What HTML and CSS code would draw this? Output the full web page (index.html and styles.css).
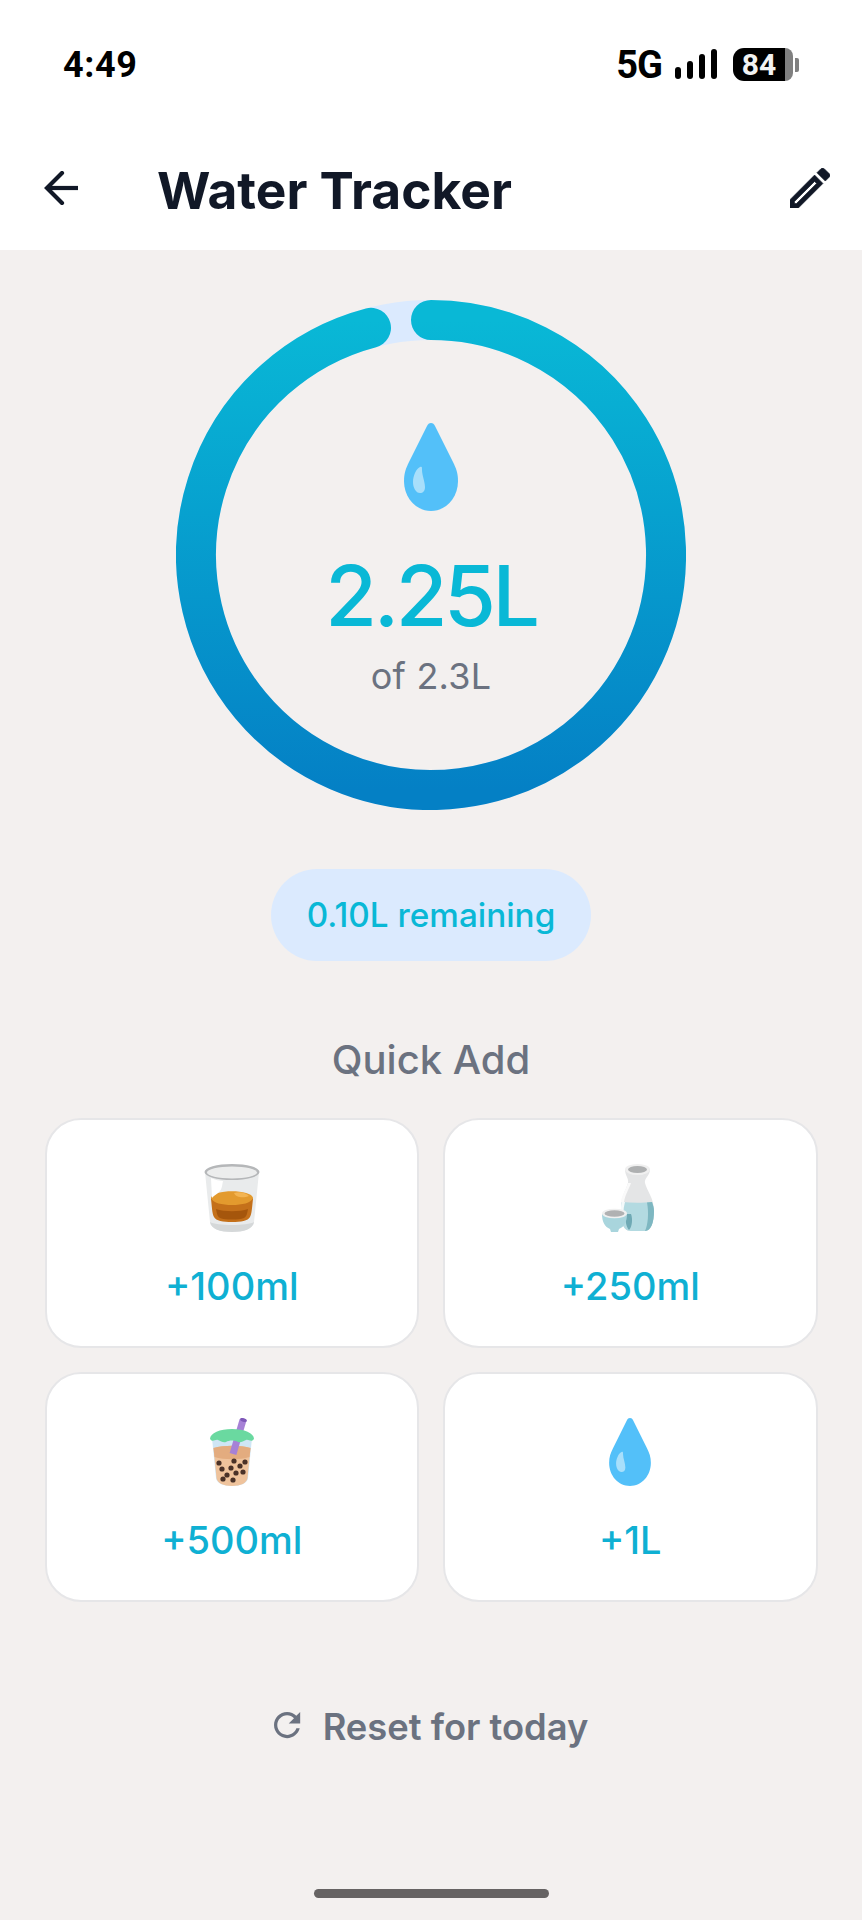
FILE: index.html
```html
<!DOCTYPE html>
<html lang="en">
<head>
  <meta charset="UTF-8">
  <meta name="viewport" content="width=device-width, initial-scale=1.0">
  <title>Water Tracker</title>
  <link rel="stylesheet" href="styles.css">
</head>
<body>
  <svg class="defs" width="0" height="0" aria-hidden="true">
    <defs>
      <symbol id="drop" viewBox="0 0 54 88">
        <path d="M27 0c2 0 3 1 4 3l18 36c3 6 5 11 5 19 0 17-12 30-27 30S0 75 0 58c0-8 2-13 5-19L23 3c1-2 2-3 4-3z" fill="#53c0f9"/>
        <path d="M16 44c2-1 2 0 2 3 0 5 3 12 3 17 0 4-2 6-5 6-4 0-7-5-7-11 0-6 3-13 7-15z" fill="#a8dffb"/>
      </symbol>
    </defs>
  </svg>

  <div class="screen">
    <!-- header -->
    <header class="top">
      <div class="status">
        <span class="time">4:49</span>
        <div class="status-right">
          <span class="net">5G</span>
          <div class="signal">
            <i class="bar-1"></i><i class="bar-2"></i><i class="bar-3"></i><i class="bar-4"></i>
          </div>
          <div class="battery">
            <span class="battery-level">84</span>
            <span class="battery-rest"></span>
            <span class="battery-nub"></span>
          </div>
        </div>
      </div>
      <div class="appbar">
        <svg class="back" viewBox="0 0 35 34" fill="none" stroke="#111827" stroke-width="4.2">
          <path d="M34 17H4"/>
          <path d="M18 2 3 17 18 32" stroke-linecap="round"/>
        </svg>
        <h1>Water Tracker</h1>
        <svg class="edit" viewBox="3 3 18 18" fill="#111827" stroke="#111827" stroke-width=".3">
          <path d="M14.06 9.02l.92.92L5.92 19H5v-.92l9.06-9.06M17.66 3c-.25 0-.51.1-.7.29l-1.83 1.83 3.75 3.75 1.83-1.83c.39-.39.39-1.02 0-1.41l-2.34-2.34c-.2-.2-.45-.29-.71-.29zm-3.6 3.19L3 17.25V21h3.75L17.81 9.94l-3.75-3.75z"/>
        </svg>
      </div>
    </header>

    <main class="content">
      <!-- progress ring -->
      <section class="ring">
        <svg class="ring-svg" viewBox="0 0 510 510" fill="none">
          <defs>
            <linearGradient id="ring-grad" x1="0" y1="0" x2="0" y2="1">
              <stop offset="0" stop-color="#09b8d6"/>
              <stop offset="1" stop-color="#0480c5"/>
            </linearGradient>
          </defs>
          <circle cx="255" cy="255" r="235" stroke="#dbeafe" stroke-width="40"/>
          <path d="M255 20A235 235 0 1 1 195 27.8" stroke="url(#ring-grad)" stroke-width="40" stroke-linecap="round"/>
        </svg>
        <div class="ring-inner">
          <svg class="ring-drop"><use href="#drop"/></svg>
          <div class="amount">2.25L</div>
          <div class="goal">of 2.3L</div>
        </div>
      </section>

      <div class="pill">0.10L remaining</div>

      <h2>Quick Add</h2>

      <div class="cards">
        <button class="card">
          <svg class="card-icon" viewBox="0 0 56 68">
            <path d="M1 8 6 58c.5 6 10 10 22 10s21.500-4 22-10L55 8z" fill="#e9ebec"/>
            <path d="M7 35c1-9 41-9 42 0-1 8-1 14-3 18-2 4-9 5-18 5s-16-1-18-5c-2-4-2-10-3-18z" fill="#c4701a"/>
            <path d="M7 34c1-9 41-9 42 0-2 5-11 7-21 7S9 39 7 34z" fill="#e39a2e"/>
            <path d="M12 45c8 3 24 3 32 0-1 6-2 8-4 9-5 2-19 2-24 0-2-1-3-3-4-9z" fill="#a5560c"/>
            <path d="M30 29c6-2 12 0 15 3-5 2-13 2-15-3z" fill="#f3b452"/>
            <path d="M7 14c4 2 9 3 12 3-1 5-1 9-5 12-2 2-5 3-6 5z" fill="#fff"/>
            <ellipse cx="28" cy="8" rx="27.500" ry="8" fill="#b5b7b9"/>
            <ellipse cx="28" cy="8.500" rx="25" ry="6" fill="#eceded"/>
            <path d="M6 58c1 7 10 10 22 10s21-3 22-10c-6 4-38 4-44 0z" fill="#d5d8d9"/>
          </svg>
          <span>+100ml</span>
        </button>
        <button class="card">
          <svg class="card-icon" viewBox="0 0 56 68">
            <path d="M23 5c0 7 4 9 3 14-2 7-7 13-7 26 0 11 1 22 10 22h14c6 0 9-9 9-20 0-13-7-20-9-28-1-5 5-7 5-14z" fill="#e4e5e6"/>
            <path d="M20 38c10 1 21 1 30 0 1 3 2 6 2 9 0 11-3 20-9 20H29c-9 0-10-11-10-22 0-3 0-5 1-7z" fill="#b3dae1"/>
            <path d="M45 38.500l5-.500c1 3 2 6 2 9 0 11-3 20-9 20 3-6 4-18 2-28.500z" fill="#7eb7c1"/>
            <path d="M20 38c-1 2-1 4-1 7 0 6 0 12 2 16 0-8 0-16 2-23z" fill="#f4fafb"/>
            <path d="M26 19c-2 7-7 13-7 19h3c1-7 5-13 7-19z" fill="#fafafa"/>
            <ellipse cx="35.500" cy="5.500" rx="12.500" ry="5.500" fill="#f0f0f0"/>
            <ellipse cx="35.500" cy="5.500" rx="9.500" ry="3.500" fill="#aeb0b1"/>
            <path d="M24 50h5c2 5 1 13-2 16-3-3-4-10-3-16z" fill="#6fa9b4"/>
            <path d="M0 50c0 8 3 13 8 15l1 3h7l1-3c5-2 8-7 8-15z" fill="#a9d5dd"/>
            <ellipse cx="12.500" cy="49.500" rx="12.500" ry="4.800" fill="#f0f0f0"/>
            <ellipse cx="12.500" cy="49.500" rx="10" ry="3.200" fill="#b0b1b2"/>
          </svg>
          <span>+250ml</span>
        </button>
        <button class="card">
          <svg class="card-icon card-tea" viewBox="0 0 44 68">
            <path d="M2 20 6 60c.5 5 7 8 16 8s15.500-3 16-8l4-40z" fill="#cfe6f5"/>
            <path d="M3.500 30c10-3 27-3 37 0l-3 30c-.5 5-7 8-15.500 8S7 65 6.500 60z" fill="#efc39c"/>
            <path d="M3.500 30c10-3 27-3 37 0l-1 9c-9 3-26 3-35 0z" fill="#e3ac7f"/>
            <path d="M33 2 23 36" fill="none" stroke="#a681d6" stroke-width="7"/>
            <g fill="#4a3228">
              <circle cx="9" cy="45" r="2.600"/><circle cx="24" cy="43" r="2.600"/><circle cx="35" cy="44" r="2.600"/>
              <circle cx="12" cy="51" r="2.600"/><circle cx="21" cy="50" r="2.600"/><circle cx="30" cy="48" r="2.600"/>
              <circle cx="17" cy="57" r="2.600"/><circle cx="26" cy="55" r="2.600"/><circle cx="33" cy="54" r="2.600"/>
              <circle cx="23" cy="62" r="2.600"/><circle cx="13" cy="61" r="2.600"/>
            </g>
            <path d="M0 21C0 15 10 11 22 11s22 4 22 10c-3 4-5 0-8 1-3 1-5 3-8 2-3-2-9-2-12 0-3 1-5-1-8-2-3-1-5 3-8-1z" fill="#6ad9a0"/>
            <ellipse cx="33.500" cy="2" rx="3.500" ry="1.800" fill="#7e57b8" transform="rotate(17 33.500 2)"/>
          </svg>
          <span>+500ml</span>
        </button>
        <button class="card">
          <svg class="card-icon card-drop"><use href="#drop"/></svg>
          <span>+1L</span>
        </button>
      </div>

      <button class="reset">
        <svg class="reset-icon" viewBox="4 4 16.500 16.500" fill="#6b7280">
          <path d="M17.650 6.350C16.200 4.900 14.210 4 12 4c-4.420 0-7.990 3.580-7.990 8s3.570 8 7.990 8c3.730 0 6.840-2.550 7.730-6h-2.080c-.82 2.330-3.040 4-5.650 4-3.310 0-6-2.690-6-6s2.690-6 6-6c1.660 0 3.140.69 4.220 1.780L13 11h7V4l-2.350 2.350z"/>
        </svg>
        <span>Reset for today</span>
      </button>
    </main>

    <div class="home-bar"></div>
  </div>
</body>
</html>
```

FILE: styles.css
```css
* {
  box-sizing: border-box;
}

body {
  margin: 0;
  font-family: Inter, "Noto Sans", sans-serif;
  background-color: #f3f0ef;
}

.defs {
  position: absolute;
}

.screen {
  width: 862px;
  height: 1920px;
  display: flex;
  flex-direction: column;
}

/* header */
.top {
  height: 250px;
  background-color: #fff;
  flex-shrink: 0;
}

.status {
  height: 150px;
  padding: 48px 63px 0;
  display: flex;
  justify-content: space-between;
  align-items: flex-start;
  color: #000;
}

.time {
  font-family: Roboto, sans-serif;
  font-weight: 700;
  font-size: 36px;
  letter-spacing: .6px;
  line-height: 34px;
}

.status-right {
  display: flex;
  align-items: flex-start;
}

.net {
  font-family: Roboto, sans-serif;
  font-weight: 700;
  font-size: 38px;
  line-height: 34px;
  letter-spacing: -1px;
  margin-right: 13px;
}

.signal {
  display: flex;
  align-items: flex-end;
  gap: 6px;
  height: 31px;
}

.signal i {
  display: block;
  width: 6px;
  background-color: #000;
  border-radius: 3px;
}

.bar-1 { height: 12px; }
.bar-2 { height: 18px; }
.bar-3 { height: 25px; }
.bar-4 { height: 30px; }

.battery {
  display: flex;
  align-items: center;
  margin-left: 16px;
}

.battery-level {
  width: 52px;
  height: 33px;
  background-color: #000;
  color: #f2f2f2;
  border-radius: 11px 0 0 11px;
  font-family: Roboto, sans-serif;
  font-weight: 700;
  font-size: 30px;
  line-height: 33px;
  text-align: center;
}

.battery-rest {
  width: 8px;
  height: 33px;
  background-color: #808080;
  border-radius: 0 8px 8px 0;
}

.battery-nub {
  width: 4px;
  height: 14px;
  margin-left: 2px;
  background-color: #808080;
  border-radius: 0 2px 2px 0;
}

.appbar {
  height: 80px;
  padding: 0 32px 0 44px;
  display: flex;
  align-items: center;
}

.back {
  width: 35px;
  height: 34px;
  margin-bottom: 4px;
}

h1 {
  margin: 0 0 0 78px;
  flex: 1;
  font-size: 51.500px;
  font-weight: 700;
  line-height: 60px;
  color: #111827;
}

.edit {
  width: 40px;
  height: 40px;
  margin-bottom: 4px;
}

/* main */
.content {
  flex: 1;
  display: flex;
  flex-direction: column;
  align-items: center;
  padding: 50px 44.500px 0;
}

.ring {
  position: relative;
  width: 510px;
  height: 510px;
  flex-shrink: 0;
}

.ring-svg {
  display: block;
  width: 510px;
  height: 510px;
}

.ring-inner {
  position: absolute;
  inset: 0;
  display: flex;
  flex-direction: column;
  align-items: center;
  padding-top: 123px;
}

.ring-drop {
  width: 54px;
  height: 88px;
}

.amount {
  margin-top: 35px;
  font-size: 84px;
  font-weight: 500;
  letter-spacing: -3.400px;
  line-height: 100px;
  color: #09b8d6;
}

.goal {
  margin-top: 8px;
  font-size: 36px;
  letter-spacing: .2px;
  line-height: 44px;
  color: #6b7280;
}

.pill {
  margin-top: 59px;
  width: 320px;
  height: 92px;
  background-color: #dbeafe;
  border-radius: 46px;
  font-size: 33.300px;
  font-weight: 500;
  line-height: 92px;
  text-align: center;
  color: #09b8d6;
}

h2 {
  margin: 75px 0 0;
  font-size: 40px;
  font-weight: 500;
  line-height: 48px;
  color: #6b7280;
}

.cards {
  margin-top: 34px;
  width: 100%;
  display: grid;
  grid-template-columns: 1fr 1fr;
  gap: 24px;
}

.card {
  height: 230px;
  padding: 44px 0 0;
  background-color: #fff;
  border: 2px solid #e6e6e8;
  border-radius: 36px;
  font-family: inherit;
  font-size: 38px;
  font-weight: 500;
  color: #0fb0d3;
  display: flex;
  flex-direction: column;
  align-items: center;
}

.card span {
  margin-top: 30px;
  line-height: 48px;
}

.card-icon {
  display: block;
  height: 68px;
  width: 56px;
}

.card-tea {
  width: 44px;
}

.card-drop {
  width: 42px;
}

.reset {
  margin-top: 102px;
  padding: 0;
  background: none;
  border: none;
  font-family: inherit;
  font-size: 36.300px;
  font-weight: 600;
  line-height: 46px;
  color: #6b7280;
  display: flex;
  align-items: center;
  gap: 22px;
}

.reset-icon {
  width: 27px;
  height: 27px;
  margin-bottom: 4px;
}

.home-bar {
  width: 235px;
  height: 9px;
  margin: 0 auto 22px;
  background-color: #666363;
  border-radius: 5px;
  flex-shrink: 0;
}
```
